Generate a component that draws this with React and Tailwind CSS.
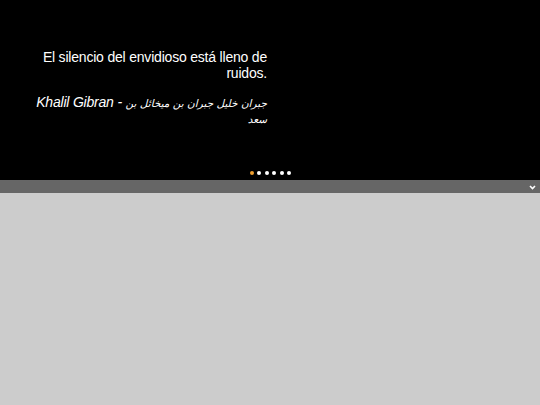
import React from 'react';

const dots = [0, 1, 2, 3, 4, 5];

export default function App() {
  return (
    <div className="min-h-[405px] bg-[#cccccc] font-['Liberation_Sans',Arial,sans-serif]">
      {/* Quote slider */}
      <div className="h-[180px] bg-black flex flex-col">
        <div className="flex-1 pt-[49px]">
          <div className="ml-[20px] w-[247px] text-right text-white text-[14px] leading-[16px] tracking-[-0.2px]">
            <p>El silencio del envidioso está lleno de ruidos.</p>
            <p className="mt-[13px] italic">
              Khalil Gibran -{' '}
              <span className="font-['DejaVu_Sans',sans-serif] text-[10.5px] leading-[10px] tracking-normal">
                جبران خليل جبران بن ميخائل بن سعد
              </span>
            </p>
          </div>
        </div>
        <div className="flex justify-center gap-[3.5px] pb-[5px] pl-[1px]">
          {dots.map((d) => (
            <span
              key={d}
              className={'w-[4px] h-[4px] rounded-full ' + (d === 0 ? 'bg-[#f0a030]' : 'bg-white')}
            />
          ))}
        </div>
      </div>

      {/* Toggle bar */}
      <div className="h-[13px] bg-[#666666] flex items-center justify-end pr-[4px]">
        <svg width="7" height="5" viewBox="0 0 7 5" className="mt-[1px]">
          <path d="M1 1 L3.5 3.5 L6 1" stroke="white" strokeWidth="1.6" fill="none" />
        </svg>
      </div>
    </div>
  );
}
